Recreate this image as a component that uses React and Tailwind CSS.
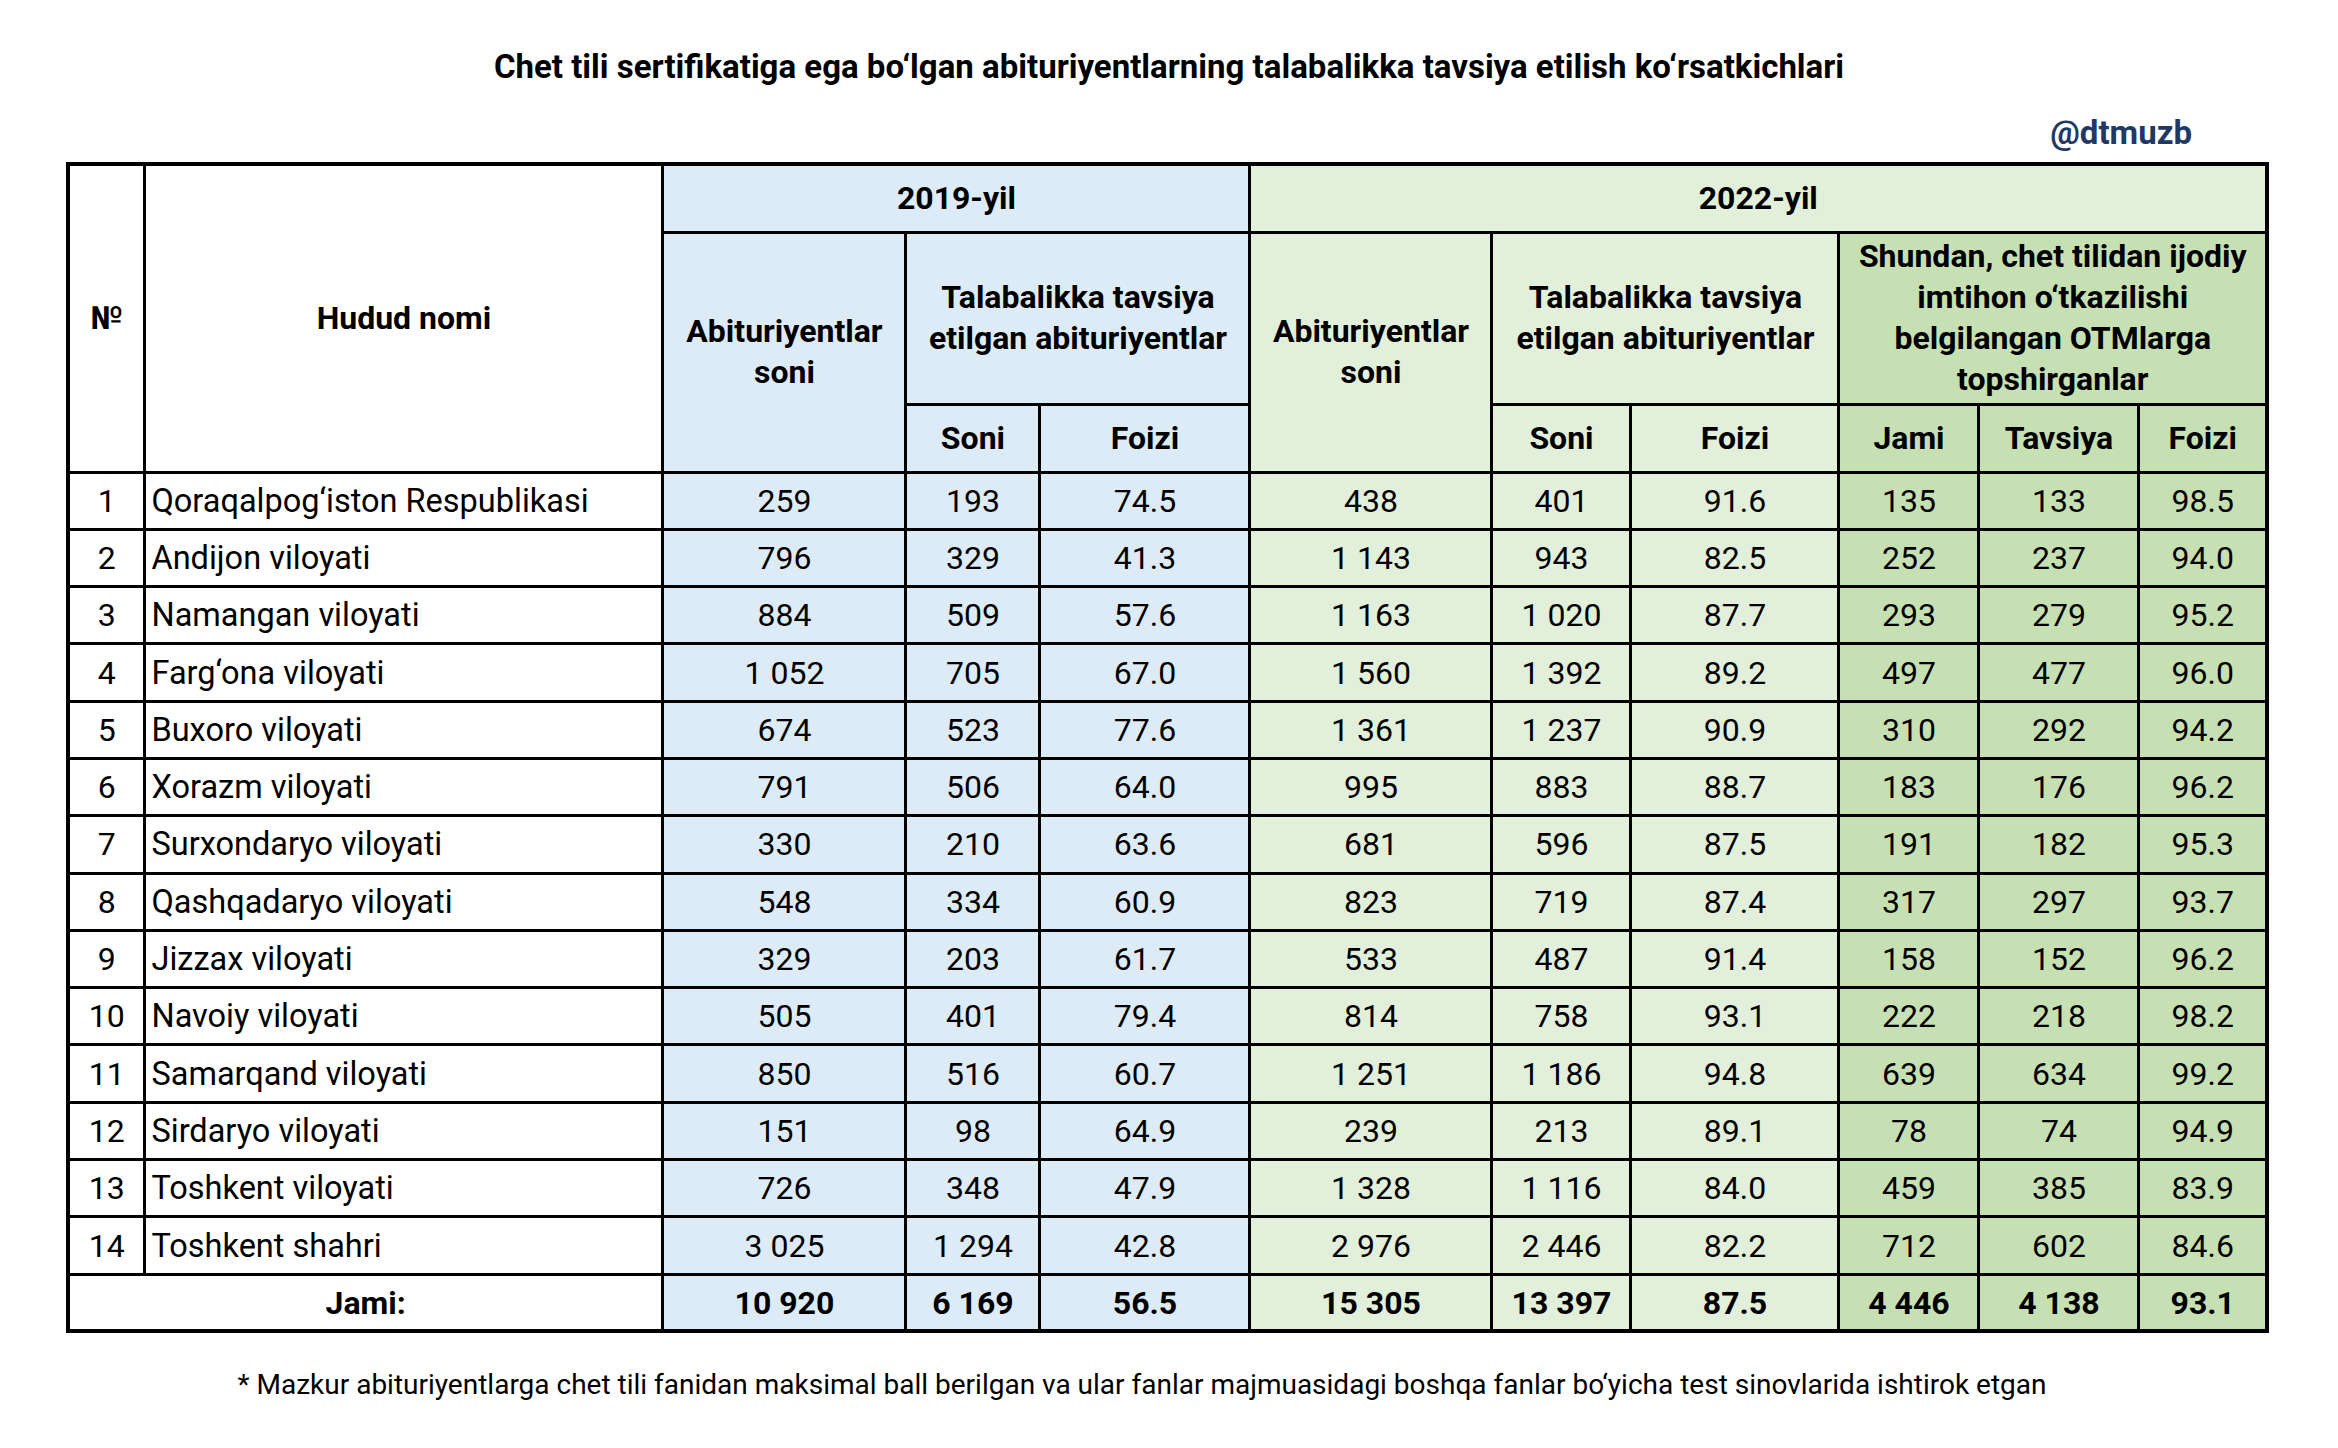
import React from "react";

const rows = [
  ["1", "Qoraqalpog‘iston Respublikasi", "259", "193", "74.5", "438", "401", "91.6", "135", "133", "98.5"],
  ["2", "Andijon viloyati", "796", "329", "41.3", "1 143", "943", "82.5", "252", "237", "94.0"],
  ["3", "Namangan viloyati", "884", "509", "57.6", "1 163", "1 020", "87.7", "293", "279", "95.2"],
  ["4", "Farg‘ona viloyati", "1 052", "705", "67.0", "1 560", "1 392", "89.2", "497", "477", "96.0"],
  ["5", "Buxoro viloyati", "674", "523", "77.6", "1 361", "1 237", "90.9", "310", "292", "94.2"],
  ["6", "Xorazm viloyati", "791", "506", "64.0", "995", "883", "88.7", "183", "176", "96.2"],
  ["7", "Surxondaryo viloyati", "330", "210", "63.6", "681", "596", "87.5", "191", "182", "95.3"],
  ["8", "Qashqadaryo viloyati", "548", "334", "60.9", "823", "719", "87.4", "317", "297", "93.7"],
  ["9", "Jizzax viloyati", "329", "203", "61.7", "533", "487", "91.4", "158", "152", "96.2"],
  ["10", "Navoiy viloyati", "505", "401", "79.4", "814", "758", "93.1", "222", "218", "98.2"],
  ["11", "Samarqand viloyati", "850", "516", "60.7", "1 251", "1 186", "94.8", "639", "634", "99.2"],
  ["12", "Sirdaryo viloyati", "151", "98", "64.9", "239", "213", "89.1", "78", "74", "94.9"],
  ["13", "Toshkent viloyati", "726", "348", "47.9", "1 328", "1 116", "84.0", "459", "385", "83.9"],
  ["14", "Toshkent shahri", "3 025", "1 294", "42.8", "2 976", "2 446", "82.2", "712", "602", "84.6"],
];

const total = ["10 920", "6 169", "56.5", "15 305", "13 397", "87.5", "4 446", "4 138", "93.1"];

// background per value column (2019 blue, 2022 light green, last group darker green)
const colBg = [
  "bg-[#ddebf7]", "bg-[#ddebf7]", "bg-[#ddebf7]",
  "bg-[#e2efda]", "bg-[#e2efda]", "bg-[#e2efda]",
  "bg-[#c6e0b4]", "bg-[#c6e0b4]", "bg-[#c6e0b4]",
];

const cell = "border-[3px] border-black text-center align-middle";

const App = () => {
  return (
    <div
      className="w-[2338px] h-[1448px] bg-white flex flex-col items-center pt-[47px] text-black"
      style={{ fontFamily: "Roboto, 'Noto Sans', sans-serif" }}
    >
      <h1 className="text-[33px] leading-[40px] font-bold">
        Chet tili sertifikatiga ega bo‘lgan abituriyentlarning talabalikka tavsiya etilish ko‘rsatkichlari
      </h1>

      <div className="w-[2199px] mr-[3px] flex justify-end pr-[75px] mt-[27px]">
        <span className="text-[33px] leading-[38px] font-bold text-[#1f3864]">@dtmuzb</span>
      </div>

      <table className="mt-[10px] mr-[3px] w-[2199px] table-fixed border-collapse border-[4px] border-black text-[32px]">
        <colgroup>
          <col className="w-[77px]" />
          <col className="w-[518px]" />
          <col className="w-[243px]" />
          <col className="w-[134px]" />
          <col className="w-[210px]" />
          <col className="w-[242px]" />
          <col className="w-[139px]" />
          <col className="w-[208px]" />
          <col className="w-[140px]" />
          <col className="w-[160px]" />
          <col className="w-[128px]" />
        </colgroup>
        <thead className="font-bold leading-[41px]">
          <tr className="h-[68px]">
            <th rowSpan={3} className={cell}>№</th>
            <th rowSpan={3} className={cell}>Hudud nomi</th>
            <th colSpan={3} className={`${cell} bg-[#ddebf7]`}>2019-yil</th>
            <th colSpan={6} className={`${cell} bg-[#e2efda]`}>2022-yil</th>
          </tr>
          <tr className="h-[172px]">
            <th rowSpan={2} className={`${cell} bg-[#ddebf7]`}>
              Abituriyentlar
              <br />
              soni
            </th>
            <th colSpan={2} className={`${cell} bg-[#ddebf7]`}>
              Talabalikka tavsiya
              <br />
              etilgan abituriyentlar
            </th>
            <th rowSpan={2} className={`${cell} bg-[#e2efda]`}>
              Abituriyentlar
              <br />
              soni
            </th>
            <th colSpan={2} className={`${cell} bg-[#e2efda]`}>
              Talabalikka tavsiya
              <br />
              etilgan abituriyentlar
            </th>
            <th colSpan={3} className={`${cell} bg-[#c6e0b4]`}>
              Shundan, chet tilidan ijodiy
              <br />
              imtihon o‘tkazilishi
              <br />
              belgilangan OTMlarga
              <br />
              topshirganlar
            </th>
          </tr>
          <tr className="h-[68px]">
            <th className={`${cell} bg-[#ddebf7]`}>Soni</th>
            <th className={`${cell} bg-[#ddebf7]`}>Foizi</th>
            <th className={`${cell} bg-[#e2efda]`}>Soni</th>
            <th className={`${cell} bg-[#e2efda]`}>Foizi</th>
            <th className={`${cell} bg-[#c6e0b4]`}>Jami</th>
            <th className={`${cell} bg-[#c6e0b4]`}>Tavsiya</th>
            <th className={`${cell} bg-[#c6e0b4]`}>Foizi</th>
          </tr>
        </thead>
        <tbody className="leading-[38px]">
          {rows.map((r) => (
            <tr key={r[0]} className="h-[57.3px]">
              <td className={cell}>{r[0]}</td>
              <td className="border-[3px] border-black text-left pl-[5px] align-middle whitespace-nowrap text-[32.5px]">
                {r[1]}
              </td>
              {r.slice(2).map((v, i) => (
                <td key={i} className={`${cell} ${colBg[i]}`}>
                  {v}
                </td>
              ))}
            </tr>
          ))}
          <tr className="h-[57.3px] font-bold">
            <td colSpan={2} className={cell}>Jami:</td>
            {total.map((v, i) => (
              <td key={i} className={`${cell} ${colBg[i]}`}>
                {v}
              </td>
            ))}
          </tr>
        </tbody>
      </table>

      <p className="mt-[35px] mr-[54px] text-[28px] leading-[34px]">
        * Mazkur abituriyentlarga chet tili fanidan maksimal ball berilgan va ular fanlar majmuasidagi boshqa fanlar bo‘yicha test sinovlarida ishtirok etgan
      </p>
    </div>
  );
};

export default App;
